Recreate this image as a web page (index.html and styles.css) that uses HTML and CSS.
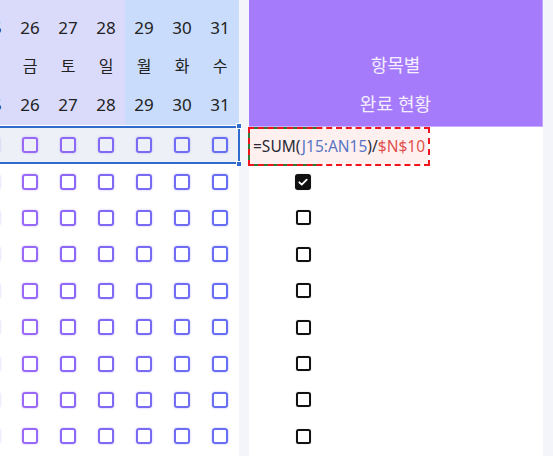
FILE: index.html
```html
<!DOCTYPE html>
<html lang="ko">
<head>
    <meta charset="UTF-8">
    <title>월간 체크리스트</title>
    <link rel="stylesheet" href="styles.css">
</head>
<body>

<div class="sheet">
    <!-- day columns -->
    <section class="days">
        <div class="days-inner">
            <div class="days-head">
                <div class="hcol"><span>25</span><span class="wd">목</span><span>25</span></div>
                <div class="hcol"><span>26</span><span class="wd">금</span><span>26</span></div>
                <div class="hcol"><span>27</span><span class="wd">토</span><span>27</span></div>
                <div class="hcol"><span>28</span><span class="wd">일</span><span>28</span></div>
                <div class="hcol blue"><span>29</span><span class="wd">월</span><span>29</span></div>
                <div class="hcol blue"><span>30</span><span class="wd">화</span><span>30</span></div>
                <div class="hcol blue"><span>31</span><span class="wd">수</span><span>31</span></div>
            </div>

            <div class="row sel">
                <div class="cell"><i class="box"></i></div><div class="cell"><i class="box"></i></div><div class="cell"><i class="box"></i></div><div class="cell"><i class="box"></i></div><div class="cell"><i class="box"></i></div><div class="cell"><i class="box"></i></div><div class="cell"><i class="box"></i></div>
            </div>
            <div class="row">
                <div class="cell"><i class="box"></i></div><div class="cell"><i class="box"></i></div><div class="cell"><i class="box"></i></div><div class="cell"><i class="box"></i></div><div class="cell"><i class="box"></i></div><div class="cell"><i class="box"></i></div><div class="cell"><i class="box"></i></div>
            </div>
            <div class="row">
                <div class="cell"><i class="box"></i></div><div class="cell"><i class="box"></i></div><div class="cell"><i class="box"></i></div><div class="cell"><i class="box"></i></div><div class="cell"><i class="box"></i></div><div class="cell"><i class="box"></i></div><div class="cell"><i class="box"></i></div>
            </div>
            <div class="row">
                <div class="cell"><i class="box"></i></div><div class="cell"><i class="box"></i></div><div class="cell"><i class="box"></i></div><div class="cell"><i class="box"></i></div><div class="cell"><i class="box"></i></div><div class="cell"><i class="box"></i></div><div class="cell"><i class="box"></i></div>
            </div>
            <div class="row">
                <div class="cell"><i class="box"></i></div><div class="cell"><i class="box"></i></div><div class="cell"><i class="box"></i></div><div class="cell"><i class="box"></i></div><div class="cell"><i class="box"></i></div><div class="cell"><i class="box"></i></div><div class="cell"><i class="box"></i></div>
            </div>
            <div class="row">
                <div class="cell"><i class="box"></i></div><div class="cell"><i class="box"></i></div><div class="cell"><i class="box"></i></div><div class="cell"><i class="box"></i></div><div class="cell"><i class="box"></i></div><div class="cell"><i class="box"></i></div><div class="cell"><i class="box"></i></div>
            </div>
            <div class="row">
                <div class="cell"><i class="box"></i></div><div class="cell"><i class="box"></i></div><div class="cell"><i class="box"></i></div><div class="cell"><i class="box"></i></div><div class="cell"><i class="box"></i></div><div class="cell"><i class="box"></i></div><div class="cell"><i class="box"></i></div>
            </div>
            <div class="row">
                <div class="cell"><i class="box"></i></div><div class="cell"><i class="box"></i></div><div class="cell"><i class="box"></i></div><div class="cell"><i class="box"></i></div><div class="cell"><i class="box"></i></div><div class="cell"><i class="box"></i></div><div class="cell"><i class="box"></i></div>
            </div>
            <div class="row">
                <div class="cell"><i class="box"></i></div><div class="cell"><i class="box"></i></div><div class="cell"><i class="box"></i></div><div class="cell"><i class="box"></i></div><div class="cell"><i class="box"></i></div><div class="cell"><i class="box"></i></div><div class="cell"><i class="box"></i></div>
            </div>
        </div>
    </section>

    <!-- completion per item -->
    <section class="status">
        <div class="status-head">
            <span>항목별</span>
            <span>완료 현황</span>
        </div>
        <div class="srow first">
            <div class="formula">=SUM(<span class="ref">J15:AN15</span>)/<span class="abs">$N$10</span></div>
        </div>
        <div class="srow">
            <span class="cb checked">
                <svg viewBox="0 0 16 16" width="16" height="16"><path d="M4.3 8.3l2.5 2.4 4.9-5" fill="none" stroke="#fff" stroke-width="1.8" stroke-linecap="round" stroke-linejoin="round"/></svg>
            </span>
        </div>
        <div class="srow"><span class="cb"></span></div>
        <div class="srow"><span class="cb"></span></div>
        <div class="srow"><span class="cb"></span></div>
        <div class="srow"><span class="cb"></span></div>
        <div class="srow"><span class="cb"></span></div>
        <div class="srow"><span class="cb"></span></div>
        <div class="srow"><span class="cb"></span></div>
    </section>
</div>

</body>
</html>
```

FILE: styles.css
```css
body {
    margin: 0;
    background: #f4f5fa;
    font-family: 'Noto Sans', 'Noto Sans CJK KR', sans-serif;
    color: #222;
    overflow: hidden;
}

.sheet {
    display: flex;
    height: 456px;
}

/* left: day grid */
.days {
    width: 239px;
    background: #fff;
}

.days-inner {
    margin-left: -27px;
    width: 266px;
}

.days-head {
    display: flex;
    margin-bottom: 2px;
}

.hcol {
    width: 38px;
    padding-top: 9px;
    background: #dadbfb;
}

.hcol.blue {
    background: #c9dcfc;
}

.hcol span {
    display: block;
    height: 38.67px;
    line-height: 38.67px;
    text-align: center;
    font-size: 17px;
}

.hcol .wd {
    font-family: 'Noto Sans CJK KR', sans-serif;
    font-size: 16px;
    line-height: 35px;
}

.row {
    --cell-bg: #fff;
    display: flex;
    height: 36.4px;
    background: var(--cell-bg);
}

.row.sel {
    --cell-bg: #eef0f8;
    position: relative;
    outline: 2px solid #2f6bcc;
    outline-offset: -1px;
}

.row.sel::before,
.row.sel::after {
    content: '';
    position: absolute;
    right: -3px;
    width: 4px;
    height: 4px;
    background: #2f6bcc;
    border: 1px solid #fff;
}

.row.sel::before { top: -4px; }
.row.sel::after { bottom: -4px; }

.cell {
    width: 38px;
    display: flex;
    align-items: center;
    justify-content: center;
}

.box {
    display: block;
    box-sizing: border-box;
    width: 16px;
    height: 16px;
    border: 2px solid transparent;
    border-radius: 3px;
    background: linear-gradient(var(--cell-bg), var(--cell-bg)) padding-box,
                linear-gradient(90deg, #a269f7 0, #8368f4 100px, #636ff2 235px) border-box;
    background-attachment: scroll, fixed;
    box-shadow: 0 0 2px rgba(120, 105, 245, 0.5);
}

/* right: completion column */
.status {
    width: 294px;
    margin-left: 10px;
    background: #fff;
}

.status-head {
    box-sizing: border-box;
    height: 127px;
    padding-top: 46px;
    background: #a57bfb;
    border-right: 1px solid #c3a5fd;
    border-bottom: 1px solid #caaefd;
    color: #f4eeff;
    text-align: center;
    font-family: 'Noto Sans CJK KR', sans-serif;
    font-size: 18px;
}

.status-head span {
    display: block;
    height: 38.67px;
    line-height: 36px;
}

.srow {
    display: flex;
    align-items: center;
    height: 36.4px;
    padding-left: 46px;
}

.srow.first {
    padding-left: 0;
    align-items: flex-start;
}

.formula {
    box-sizing: border-box;
    flex: none;
    width: 182px;
    height: 39px;
    margin-left: -1px;
    padding-left: 3px;
    border: 2px dashed #f0141c;
    background: linear-gradient(#fff0f0, #fff0f0) padding-box,
                linear-gradient(90deg, #2f7d3a 0 70px, #fff 70px) border-box;
    font-size: 15.5px;
    line-height: 35px;
    color: #2a2a35;
    white-space: nowrap;
}

.formula .ref {
    color: #5875c4;
}

.formula .abs {
    color: #e0504c;
}

.cb {
    box-sizing: border-box;
    width: 15px;
    height: 15px;
    margin-left: 1px;
    border: 2px solid #111;
    border-radius: 2.5px;
    box-shadow: 0 0 1px rgba(0, 0, 0, 0.35);
}

.cb.checked {
    width: 16px;
    height: 16px;
    margin-left: 0;
    border: none;
    border-radius: 3px;
    background: #111;
}

.cb svg {
    display: block;
}
```
